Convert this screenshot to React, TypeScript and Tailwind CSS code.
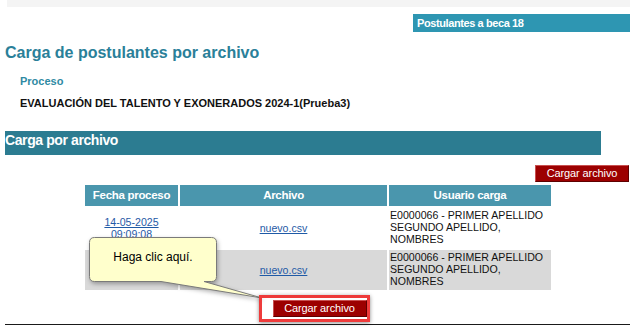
import React from "react";

const btn =
  "h-[17px] w-[94px] flex items-center justify-center bg-[#9c0000] border border-t-[#c85050] border-l-[#c85050] border-r-[#5e0000] border-b-[#5e0000] text-white text-[11px] leading-none tracking-[-0.1px]";

function Row({ gray, date, time }: { gray?: boolean; date?: string; time?: string }) {
  const bg = gray ? "bg-[#d9d9d9]" : "bg-white";
  return (
    <tr>
      <td className={`${bg} h-[40px] p-0 text-center align-middle text-[10.6px] leading-[12px]`}>
        {date && (
          <>
            <a className="text-[#1f5aa6] underline">{date}</a>
            <br />
            <span className="text-[#1f5aa6]">{time}</span>
          </>
        )}
      </td>
      <td className={`${bg} p-0 text-center align-middle text-[10.6px] leading-[12px]`}>
        <a className="text-[#1f5aa6] underline">nuevo.csv</a>
      </td>
      <td className={`${bg} pl-[1px] pt-[1px] pb-[2px] align-top text-[10.6px] leading-[12px] text-[#111]`}>
        E0000066 - PRIMER APELLIDO
        <br />
        SEGUNDO APELLIDO,
        <br />
        NOMBRES
      </td>
    </tr>
  );
}

export default function App() {
  return (
    <div className="relative w-[630px] h-[331px] overflow-hidden bg-white font-['Liberation_Sans',_Arial,_sans-serif]">
      <div className="ml-[7px] h-[7px] bg-[#f4f4f4]" />
      <div className="mt-[7px] flex justify-end">
        <div className="h-[18px] w-[217px] bg-[#2e96b2] pl-[4px] flex items-center text-white font-bold text-[11px] tracking-[-0.4px]">
          Postulantes a beca 18
        </div>
      </div>
      <div className="mt-[12px] pl-[5px] text-[16px] leading-[18px] font-bold text-[#2a8099]">
        Carga de postulantes por archivo
      </div>
      <div className="mt-[13px] pl-[20px] text-[11px] leading-[13px] font-bold text-[#2f8aa3]">
        Proceso
      </div>
      <div className="mt-[9px] pl-[20px] text-[11px] leading-[13px] font-bold text-[#111]">
        EVALUACIÓN DEL TALENTO Y EXONERADOS 2024-1(Prueba3)
      </div>
      <div className="mt-[21px] ml-[5px] w-[596px] h-[24px] bg-[#2c7c91] pt-[1px] text-white font-bold text-[14px] leading-[16px] tracking-[-0.4px]">
        Carga por archivo
      </div>
      <div className="mt-[10px] flex justify-end pr-[1px]">
        <div className={btn}>Cargar archivo</div>
      </div>
      <div className="mt-[1px] ml-[83px] w-[470px] flex flex-col items-center">
        <table className="border-separate border-spacing-[2px] w-[470px] table-fixed">
          <colgroup>
            <col className="w-[93px]" />
            <col className="w-[207px]" />
            <col className="w-[162px]" />
          </colgroup>
          <thead>
            <tr>
              {["Fecha proceso", "Archivo", "Usuario carga"].map((h) => (
                <th
                  key={h}
                  className="h-[21px] p-0 bg-[#4a96ad] text-white font-bold text-[11.5px] tracking-[-0.3px] text-center align-middle"
                >
                  {h}
                </th>
              ))}
            </tr>
          </thead>
          <tbody>
            <Row date="14-05-2025" time="09:09:08" />
            <Row gray />
          </tbody>
        </table>
        <div className="mt-[8px] ml-[3px]">
          <div className={btn}>Cargar archivo</div>
        </div>
      </div>
      <div className="mt-[7px] ml-[5px] h-px bg-[#1a1a1a]" />

      {/* callout balloon */}
      <svg
        className="absolute left-0 top-0 w-[630px] h-[331px] pointer-events-none drop-shadow-[1px_2px_2px_rgba(0,0,0,0.3)]"
        viewBox="0 0 630 331"
      >
        <path
          d="M94.5,237.5 H211.5 Q216.5,237.5 216.5,242.5 V276.5 Q216.5,281.5 211.5,281.5 H204 L262,298 L161,281.5 H94.5 Q89.5,281.5 89.5,276.5 V242.5 Q89.5,237.5 94.5,237.5 Z"
          fill="#ffffcc"
          stroke="#7a7a7a"
          strokeWidth="1"
        />
      </svg>
      <div className="absolute left-[89px] top-[250px] w-[128px] text-center text-[12px] leading-[14px] text-black">
        Haga clic aquí.
      </div>
      {/* highlight box */}
      <div className="absolute left-[259px] top-[295px] w-[111px] h-[27px] border-[3px] border-[#ee3b3b] shadow-[0_1px_4px_rgba(0,0,0,0.45)]" />
    </div>
  );
}
